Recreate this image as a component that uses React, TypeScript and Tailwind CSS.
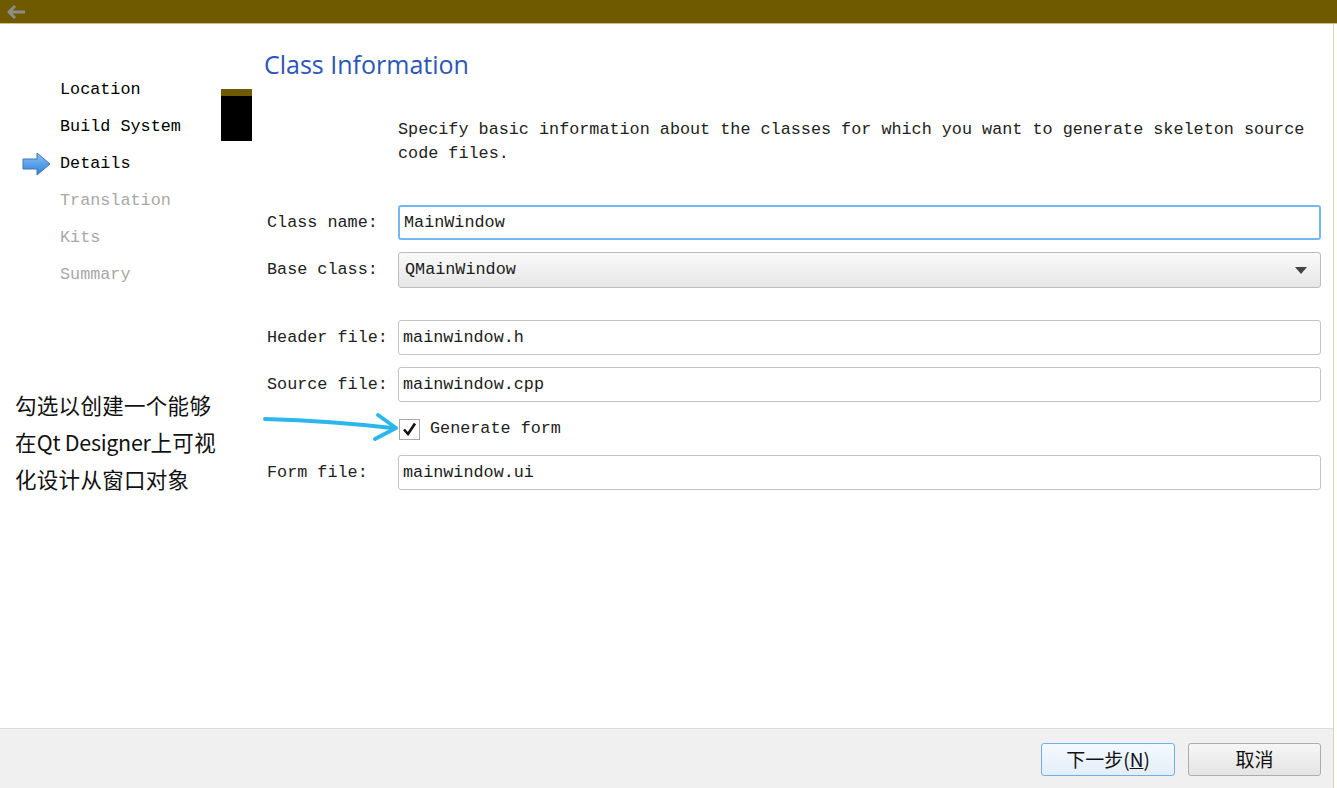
const mono = { fontFamily: '"Liberation Mono", "Noto Sans CJK SC", monospace' };

const navItems = [
  { label: "Location", done: true },
  { label: "Build System", done: true },
  { label: "Details", done: true, current: true },
  { label: "Translation", done: false },
  { label: "Kits", done: false },
  { label: "Summary", done: false },
];

function TextField({ value, focused }: { value: string; focused?: boolean }) {
  return (
    <div
      className={
        "flex-1 h-[35px] flex items-center px-[4px] rounded-[3px] bg-white text-[16.8px] text-[#1b1b1b] " +
        (focused ? "border-2 border-[#74b8f2] px-[3px]" : "border border-[#c4c4c4]")
      }
      style={mono}
    >
      {value}
    </div>
  );
}

function Row({ label, children }: { label: string; children: React.ReactNode }) {
  return (
    <div className="flex items-center">
      <div className="w-[134px] pl-[3px] text-[16.8px] text-[#222]" style={mono}>
        {label}
      </div>
      {children}
    </div>
  );
}

export default function App() {
  return (
    <div className="w-[1337px] h-[788px] flex flex-col bg-white overflow-hidden relative">
      {/* title bar */}
      <div className="h-[24px] bg-[#705a00] border-b border-[#cfc08a] flex items-center pl-[7px] shrink-0">
        <svg width="20" height="14" viewBox="0 0 20 14">
          <path d="M8 1 L2 7 L8 13 M2 7 H18" stroke="#8c8c8c" strokeWidth="3" fill="none" strokeLinejoin="round" />
        </svg>
      </div>

      <div className="flex flex-1">
        <div className="w-[1334px] border-r border-[#d9d3b8] flex flex-col">
          <div className="flex flex-1">
            {/* left nav */}
            <div className="w-[264px] shrink-0 flex flex-col pt-[47px]">
              <div className="flex">
                <div className="flex flex-col w-[221px]">
                  {navItems.map((it) => (
                    <div key={it.label} className="h-[37px] flex items-center">
                      <div className="w-[60px] flex items-center pl-[22px]">
                        {it.current && (
                          <svg width="29" height="24" viewBox="0 0 29 24">
                            <defs>
                              <linearGradient id="ar" x1="0" y1="0" x2="0" y2="1">
                                <stop offset="0" stopColor="#8cc2f5" />
                                <stop offset="1" stopColor="#2f7fdb" />
                              </linearGradient>
                            </defs>
                            <path d="M1 7 H15 V1 L28 12 L15 23 V17 H1 Z" fill="url(#ar)" stroke="#3f76b8" strokeWidth="1" />
                          </svg>
                        )}
                      </div>
                      <span
                        className={"text-[16.8px] " + (it.done ? "text-black" : "text-[#a8a8a8]")}
                        style={mono}
                      >
                        {it.label}
                      </span>
                    </div>
                  ))}
                </div>
                <div className="mt-[18px] w-[31px] h-[52px] bg-black border-t-[7px] border-[#705a00]" />
              </div>

              <div
                className="mt-[93px] pl-[15px] text-[21.5px] leading-[37px] text-[#111] tracking-[0.3px]"
                style={{ fontFamily: '"Noto Sans CJK SC", "Noto Sans", sans-serif' }}
              >
                <div>勾选以创建一个能够</div>
                <div>
                  在<span className="tracking-[-0.3px]">Qt Designer</span>上可视
                </div>
                <div>化设计从窗口对象</div>
              </div>
            </div>

            {/* content */}
            <div className="flex-1 flex flex-col pr-[12px]">
              <div
                className="mt-[23px] h-[34px] text-[25px] text-[#2b56b8] leading-[34px]"
                style={{ fontFamily: '"Open Sans", "Noto Sans", sans-serif' }}
              >
                Class Information
              </div>
              <div className="mt-[37px] pl-[134px] text-[16.8px] leading-[24px] text-[#222]" style={mono}>
                Specify basic information about the classes for which you want to generate skeleton source
                <br />
                code files.
              </div>

              <div className="mt-[39px] flex flex-col">
                <Row label="Class name:">
                  <TextField value="MainWindow" focused />
                </Row>
                <div className="mt-[12px]">
                  <Row label="Base class:">
                    <div
                      className="flex-1 h-[36px] flex items-center justify-between pl-[6px] pr-[13px] rounded-[3px] border border-[#bdbdbd] bg-gradient-to-b from-[#fafafa] to-[#e6e6e6] text-[16.8px] text-[#1b1b1b]"
                      style={mono}
                    >
                      <span>QMainWindow</span>
                      <svg width="12" height="7" viewBox="0 0 12 7">
                        <path d="M0 0 H12 L6 7 Z" fill="#444" />
                      </svg>
                    </div>
                  </Row>
                </div>
                <div className="mt-[32px]">
                  <Row label="Header file:">
                    <TextField value="mainwindow.h" />
                  </Row>
                </div>
                <div className="mt-[12px]">
                  <Row label="Source file:">
                    <TextField value="mainwindow.cpp" />
                  </Row>
                </div>
                <div className="mt-[15px] h-[24px] flex items-center pl-[135px]">
                  <div className="w-[21px] h-[21px] border border-[#a8a8a8] bg-white flex items-center justify-center">
                    <svg width="15" height="14" viewBox="0 0 15 14">
                      <path d="M2 7.5 L6 12 L13 1.5" stroke="#111" strokeWidth="2.6" fill="none" />
                    </svg>
                  </div>
                  <span className="ml-[10px] text-[16.8px] text-[#222]" style={mono}>
                    Generate form
                  </span>
                </div>
                <div className="mt-[14px]">
                  <Row label="Form file:">
                    <TextField value="mainwindow.ui" />
                  </Row>
                </div>
              </div>
            </div>
          </div>

          {/* footer */}
          <div className="h-[60px] border-t border-[#dcdcdc] bg-[#f0f0f0] flex items-center justify-end gap-[13px] pr-[12px] pt-[2px]">
            <button
              className="w-[134px] h-[33px] rounded-[3px] border border-[#6fb0ea] bg-gradient-to-b from-[#f4f9fe] to-[#e3eef9] text-[19px] text-[#111]"
              style={{ fontFamily: '"Noto Sans CJK SC", sans-serif' }}
            >
              下一步(<span className="underline">N</span>)
            </button>
            <button
              className="w-[133px] h-[33px] rounded-[3px] border border-[#adadad] bg-gradient-to-b from-[#f6f6f6] to-[#e4e4e4] text-[19px] text-[#111]"
              style={{ fontFamily: '"Noto Sans CJK SC", sans-serif' }}
            >
              取消
            </button>
          </div>
        </div>
        <div className="flex-1 bg-white" />
      </div>

      {/* annotation arrow */}
      <svg className="absolute left-[262px] top-[408px]" width="142" height="36" viewBox="0 0 142 36">
        <path d="M3 11 Q70 13 130 20" stroke="#2bb7ec" strokeWidth="4" fill="none" strokeLinecap="round" />
        <path d="M116 7 L134 20 L113 31" stroke="#2bb7ec" strokeWidth="4" fill="none" strokeLinecap="round" strokeLinejoin="round" />
      </svg>
    </div>
  );
}
